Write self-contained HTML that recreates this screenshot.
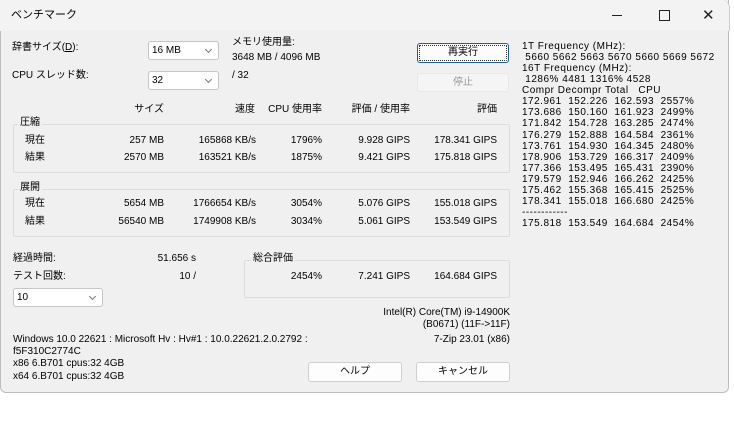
<!DOCTYPE html>
<html><head><meta charset="utf-8"><style>
body{margin:0;width:734px;height:444px;background:#fff;position:relative;overflow:hidden;font-family:"Liberation Sans","Noto Sans CJK JP",sans-serif;font-size:10px;color:#000}
.win{position:absolute;left:0;top:0;width:729px;height:393px;background:#f0f0f0;border:1px solid #bdbdbd;border-top:none;border-radius:0 0 6px 6px;box-sizing:border-box}
.tb{position:absolute;left:0;top:0;width:730px;height:31px;background:#f3f3f3;border-radius:0 8px 0 0;border-right:1px solid #ccc;box-sizing:border-box}
.t{position:absolute;white-space:nowrap;line-height:12px}
.r{text-align:right}
.cb{position:absolute;background:#fff;border:1px solid #c6c6c6;border-radius:3px;box-sizing:border-box;padding-left:3px;line-height:17px}
.cb:after{content:"";position:absolute;right:7px;top:5px;width:4px;height:4px;border-right:1px solid #777;border-bottom:1px solid #777;transform:rotate(45deg)}
.btn{position:absolute;background:#fdfdfd;border:1px solid #cfcfcf;border-radius:3px;box-sizing:border-box;text-align:center;line-height:17px}
.grp{position:absolute;border:1px solid #dcdcdc;border-radius:2px;box-sizing:border-box}
.gl{position:absolute;background:#f0f0f0;padding:0 2px;line-height:12px}
.mono{position:absolute;left:522px;top:41px;line-height:11.07px;white-space:pre;font-size:10px;letter-spacing:0.5px}
</style></head><body>
<div class="win"></div>
<div class="tb"></div>
<div class="t" style="left:11px;top:9px;font-size:11px">ベンチマーク</div>
<div class="t" style="left:612px;top:15px;width:10px;height:1px;background:#222"></div>
<div class="t" style="left:659px;top:10px;width:9px;height:9px;border:1px solid #222"></div>
<div class="t" style="left:702px;top:7px;font-size:15px;line-height:17px;color:#222">✕</div>

<div class="t" style="left:12px;top:42px">辞書サイズ(<u>D</u>):</div>
<div class="cb" style="left:148px;top:41px;width:71px;height:19px">16 MB</div>
<div class="t" style="left:12px;top:70px">CPU スレッド数:</div>
<div class="cb" style="left:148px;top:71px;width:71px;height:19px">32</div>
<div class="t" style="left:232px;top:37px">メモリ使用量:</div>
<div class="t" style="left:232px;top:52px">3648 MB / 4096 MB</div>
<div class="t" style="left:232px;top:70px">/ 32</div>
<div class="btn" style="left:417px;top:43px;width:92px;height:20px;border:1px solid #1a5fb4;outline:1px dotted #333;outline-offset:-3px">再実行</div>
<div class="btn" style="left:417px;top:73px;width:92px;height:19px;background:#f5f5f5;border-color:#e8e8e8;color:#9a9a9a">停止</div>

<div class="t r" style="left:100px;width:64px;top:104px">サイズ</div>
<div class="t r" style="left:180px;width:75px;top:104px">速度</div>
<div class="t r" style="left:250px;width:72px;top:104px">CPU 使用率</div>
<div class="t r" style="left:330px;width:80px;top:104px">評価 / 使用率</div>
<div class="t r" style="left:420px;width:77px;top:104px">評価</div>

<div class="grp" style="left:13px;top:124px;width:497px;height:49px"></div>
<div class="gl" style="left:18px;top:117px">圧縮</div>
<div class="t" style="left:25px;top:135px">現在</div>
<div class="t" style="left:25px;top:152px">結果</div>
<div class="t r" style="left:80px;width:84px;top:135px">257 MB</div>
<div class="t r" style="left:80px;width:84px;top:152px">2570 MB</div>
<div class="t r" style="left:160px;width:96px;top:135px">165868 KB/s</div>
<div class="t r" style="left:160px;width:96px;top:152px">163521 KB/s</div>
<div class="t r" style="left:260px;width:62px;top:135px">1796%</div>
<div class="t r" style="left:260px;width:62px;top:152px">1875%</div>
<div class="t r" style="left:330px;width:80px;top:135px">9.928 GIPS</div>
<div class="t r" style="left:330px;width:80px;top:152px">9.421 GIPS</div>
<div class="t r" style="left:410px;width:87px;top:135px">178.341 GIPS</div>
<div class="t r" style="left:410px;width:87px;top:152px">175.818 GIPS</div>

<div class="grp" style="left:13px;top:189px;width:497px;height:48px"></div>
<div class="gl" style="left:18px;top:182px">展開</div>
<div class="t" style="left:25px;top:198px">現在</div>
<div class="t" style="left:25px;top:216px">結果</div>
<div class="t r" style="left:80px;width:84px;top:198px">5654 MB</div>
<div class="t r" style="left:80px;width:84px;top:216px">56540 MB</div>
<div class="t r" style="left:160px;width:96px;top:198px">1766654 KB/s</div>
<div class="t r" style="left:160px;width:96px;top:216px">1749908 KB/s</div>
<div class="t r" style="left:260px;width:62px;top:198px">3054%</div>
<div class="t r" style="left:260px;width:62px;top:216px">3034%</div>
<div class="t r" style="left:330px;width:80px;top:198px">5.076 GIPS</div>
<div class="t r" style="left:330px;width:80px;top:216px">5.061 GIPS</div>
<div class="t r" style="left:410px;width:87px;top:198px">155.018 GIPS</div>
<div class="t r" style="left:410px;width:87px;top:216px">153.549 GIPS</div>

<div class="t" style="left:13px;top:253px">経過時間:</div>
<div class="t r" style="left:100px;width:96px;top:253px">51.656 s</div>
<div class="t" style="left:13px;top:271px">テスト回数:</div>
<div class="t r" style="left:100px;width:96px;top:271px">10 /</div>
<div class="cb" style="left:13px;top:288px;width:90px;height:19px">10</div>

<div class="grp" style="left:244px;top:260px;width:266px;height:38px"></div>
<div class="gl" style="left:251px;top:253px">総合評価</div>
<div class="t r" style="left:260px;width:62px;top:271px">2454%</div>
<div class="t r" style="left:330px;width:80px;top:271px">7.241 GIPS</div>
<div class="t r" style="left:410px;width:87px;top:271px">164.684 GIPS</div>

<div class="t r" style="left:300px;width:210px;top:307px">Intel(R) Core(TM) i9-14900K</div>
<div class="t r" style="left:300px;width:210px;top:319px">(B0671) (11F-&gt;11F)</div>
<div class="t" style="left:13px;top:334px">Windows 10.0 22621 : Microsoft Hv : Hv#1 : 10.0.22621.2.0.2792 :</div>
<div class="t" style="left:13px;top:346px">f5F310C2774C</div>
<div class="t" style="left:13px;top:358px">x86 6.B701 cpus:32 4GB</div>
<div class="t" style="left:13px;top:371px">x64 6.B701 cpus:32 4GB</div>
<div class="t r" style="left:350px;width:160px;top:334px">7-Zip 23.01 (x86)</div>
<div class="btn" style="left:308px;top:362px;width:94px;height:20px">ヘルプ</div>
<div class="btn" style="left:416px;top:362px;width:94px;height:20px">キャンセル</div>

<div class="mono">1T Frequency (MHz):
 5660 5662 5663 5670 5660 5669 5672
16T Frequency (MHz):
 1286% 4481 1316% 4528
Compr Decompr Total   CPU
172.961  152.226  162.593  2557%
173.686  150.160  161.923  2499%
171.842  154.728  163.285  2474%
176.279  152.888  164.584  2361%
173.761  154.930  164.345  2480%
178.906  153.729  166.317  2409%
177.366  153.495  165.431  2390%
179.579  152.946  166.262  2425%
175.462  155.368  165.415  2525%
178.341  155.018  166.680  2425%
------------
175.818  153.549  164.684  2454%</div>
</body></html>
